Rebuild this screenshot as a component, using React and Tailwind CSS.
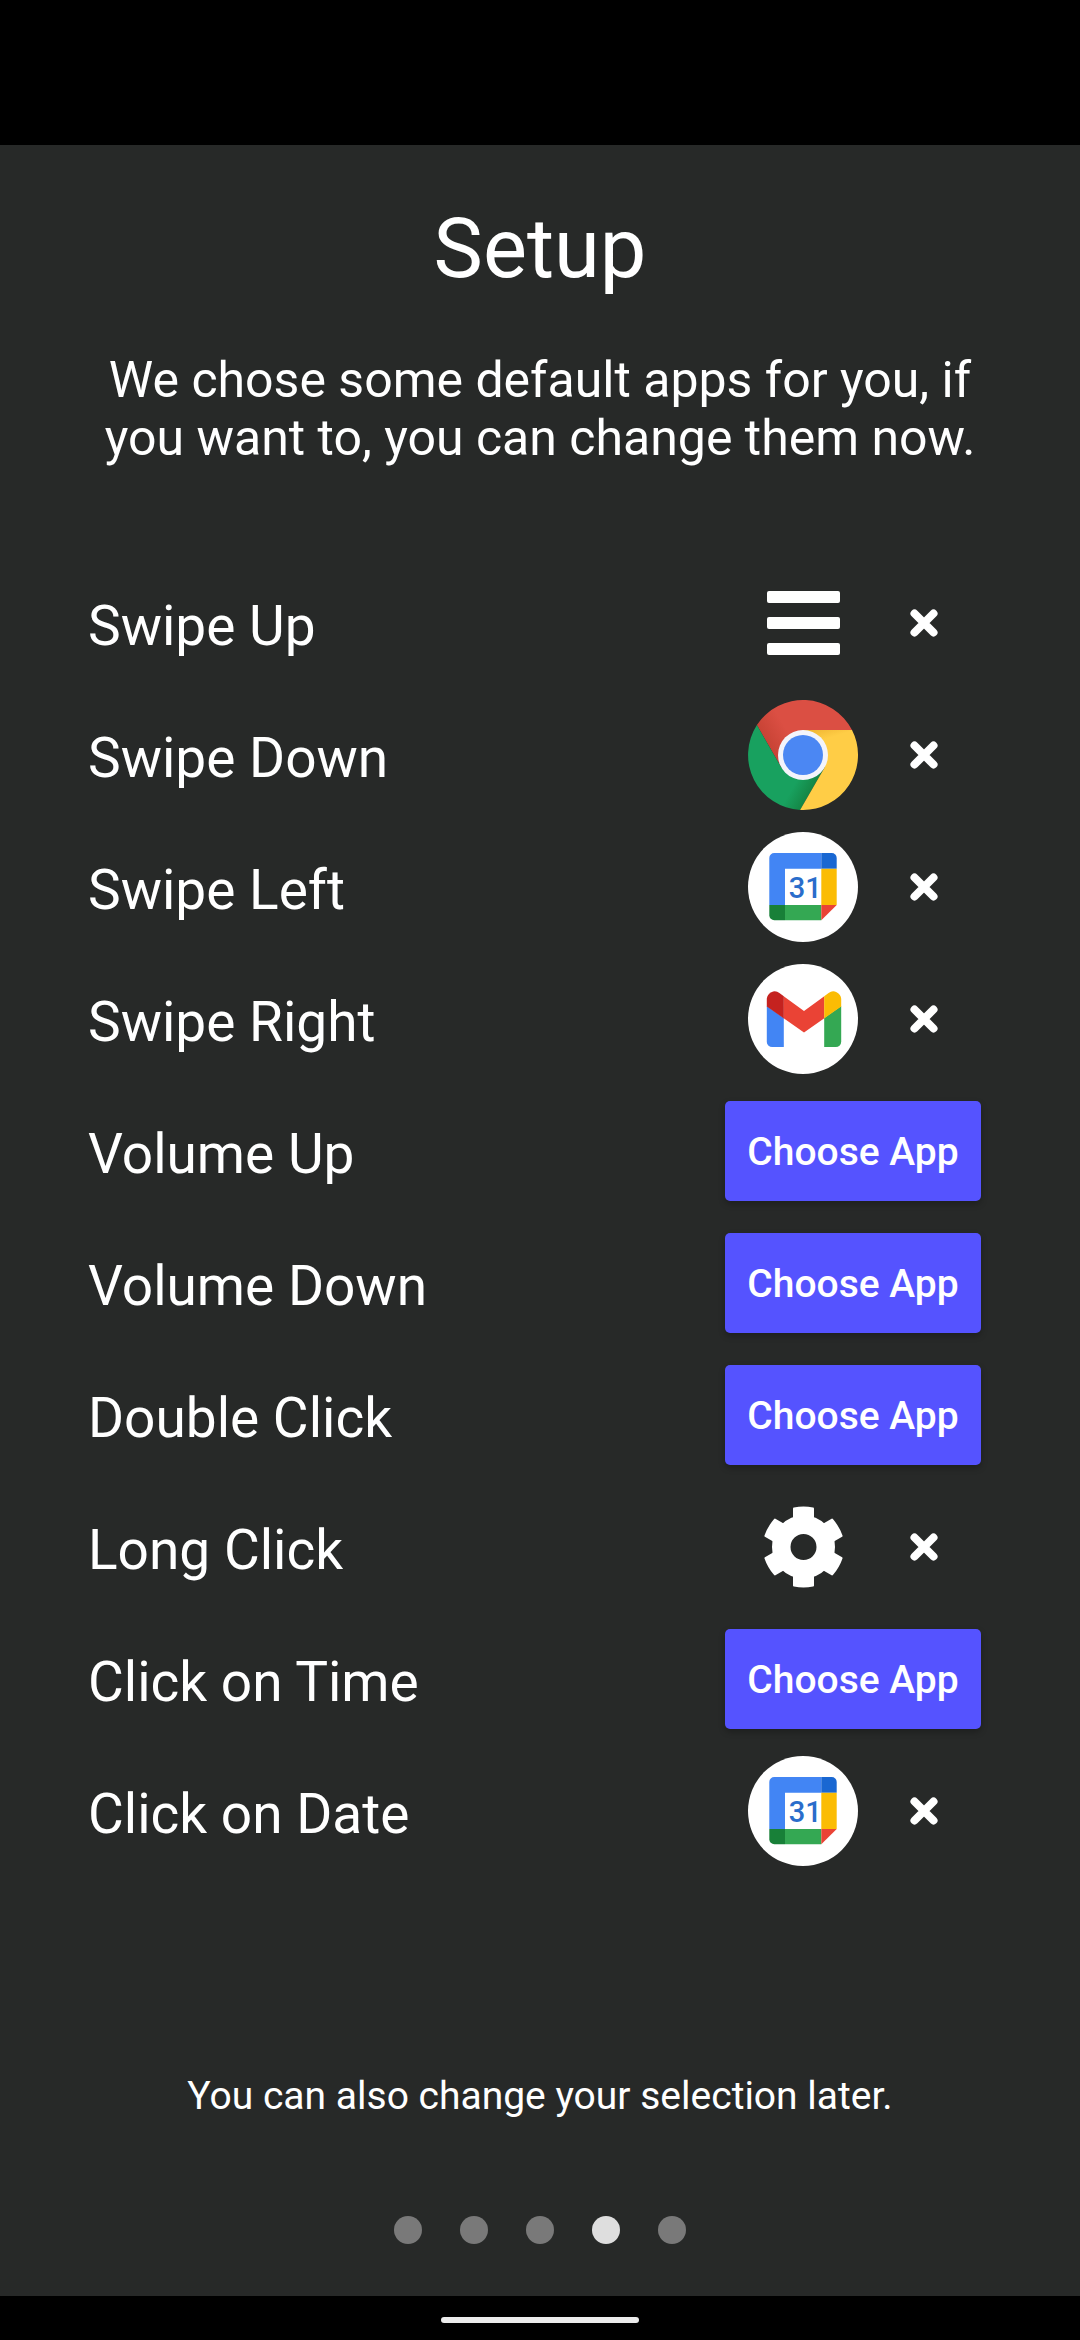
// src/pages/SetupPage.jsx
import React from "react";

const MenuIcon = () => (
  <svg viewBox="-55 -55 110 110" className="size-[110px]" fill="#fff">
    <rect x="-36" y="-32" width="73" height="12" rx="2" />
    <rect x="-36" y="-6" width="73" height="12" rx="2" />
    <rect x="-36" y="20" width="73" height="12" rx="2" />
  </svg>
);

const GearIcon = () => (
  <svg viewBox="-55 -55 110 110" className="size-[110px]" fill="#fff">
    <circle
      cx="0.5"
      r="22.25"
      fill="none"
      stroke="#fff"
      strokeWidth="18.5"
    />
    {[0, 60, 120, 180, 240, 300].map((angle) => (
      <path
        key={angle}
        transform={`translate(0.5 0) rotate(${angle})`}
        d="M-10.5 -28V-38.5Q-10.5 -39.3 -9.6 -39.5Q0 -41.3 9.6 -39.5Q10.5 -39.3 10.5 -38.5V-28Z"
      />
    ))}
  </svg>
);

const ChromeIcon = () => (
  <svg viewBox="-55 -55 110 110" className="size-[110px]">
    <defs>
      <linearGradient id="chromeRed" gradientUnits="userSpaceOnUse" x1="-36" y1="-8" x2="-14" y2="-21">
        <stop offset="0" stopColor="#c64234" />
        <stop offset="1" stopColor="#db4f43" />
      </linearGradient>
      <linearGradient id="chromeYellow" gradientUnits="userSpaceOnUse" x1="12" y1="-27" x2="16" y2="-14">
        <stop offset="0" stopColor="#efb532" />
        <stop offset="1" stopColor="#ffcd46" />
      </linearGradient>
      <linearGradient id="chromeGreen" gradientUnits="userSpaceOnUse" x1="10" y1="34" x2="-6" y2="25">
        <stop offset="0" stopColor="#148544" />
        <stop offset="1" stopColor="#18a15f" />
      </linearGradient>
    </defs>
    <path d="M49 -25A55 55 0 0 0 -46.1 -29.9L-21.65 12.5L0 0V-25Z" fill="url(#chromeRed)" />
    <path d="M-46.1 -29.9A55 55 0 0 0 -2.9 54.9L21.65 12.5L0 0L-21.65 12.5Z" fill="url(#chromeGreen)" />
    <path d="M-2.9 54.9A55 55 0 0 0 49 -25H0V0L21.65 12.5Z" fill="url(#chromeYellow)" />
    <circle r="25" fill="#f3f4fb" />
    <circle r="20" fill="#4b87f3" />
  </svg>
);

const CalendarIcon = () => (
  <svg viewBox="0 0 110 110" className="size-[110px]">
    <circle cx="55" cy="55" r="55" fill="#fff" />
    <path d="M73.3 21.1H26.3a5 5 0 0 0 -5 5V73H37V36.8H73.3Z" fill="#4285f4" />
    <path d="M73.3 21.1H83.7a5 5 0 0 1 5 5V36.8H73.3Z" fill="#1967d2" />
    <path d="M73.3 36.8H88.7V73H73.3Z" fill="#fbbc04" />
    <path d="M37 73H73.3V88.2H37Z" fill="#34a853" />
    <path d="M21.3 73H37V88.2H26.3a5 5 0 0 1 -5 -5Z" fill="#188038" />
    <path d="M73.3 73H88.7L73.3 88.2Z" fill="#ea4335" />
    <text
      x="40.7"
      y="66"
      fontFamily="Roboto, sans-serif"
      fontWeight="500"
      fontSize="29"
      fill="#2a6dcb"
    >
      31
    </text>
  </svg>
);

const GmailIcon = () => (
  <svg viewBox="0 0 110 110" className="size-[110px]">
    <circle cx="55" cy="55" r="55" fill="#fff" />
    <path d="M18.8 42L35.8 54V83H24.1a5.3 5.3 0 0 1 -5.3 -5.3Z" fill="#4285f4" />
    <path d="M93.2 42L76.2 54V83H87.9a5.3 5.3 0 0 0 5.3 -5.3Z" fill="#34a853" />
    <path d="M35.7 32.2L56 47L76.3 32.2V54.3L56 68.4L35.7 54.3Z" fill="#ea4335" />
    <path d="M18.8 42.4V34.8A8 8 0 0 1 31.4 28.9L35.8 32.2V54.4Z" fill="#c5221f" />
    <path d="M93.2 42.4V34.8A8 8 0 0 0 80.6 28.9L76.2 32.2V54.4Z" fill="#fbbc04" />
  </svg>
);

const CloseIcon = () => (
  <svg viewBox="-14 -14 28 28" className="size-7">
    <path
      d="M-9.5 -9.5L9.5 9.5M9.5 -9.5L-9.5 9.5"
      stroke="#fff"
      strokeWidth="8"
      strokeLinecap="round"
    />
  </svg>
);

const actions = [
  { label: "Swipe Up", icon: MenuIcon },
  { label: "Swipe Down", icon: ChromeIcon },
  { label: "Swipe Left", icon: CalendarIcon },
  { label: "Swipe Right", icon: GmailIcon },
  { label: "Volume Up" },
  { label: "Volume Down" },
  { label: "Double Click" },
  { label: "Long Click", icon: GearIcon },
  { label: "Click on Time" },
  { label: "Click on Date", icon: CalendarIcon },
];

function ActionRow({ label, icon: Icon }) {
  return (
    <div className="flex h-[132px] items-center justify-between pr-[99px] pl-[88px]">
      <p className="pt-1.5 text-[55px] leading-[64px]">{label}</p>
      {Icon ? (
        <div className="flex w-[256px] items-center pl-[23px]">
          <Icon />
          <button className="ml-[52px]">
            <CloseIcon />
          </button>
        </div>
      ) : (
        <button className="h-[100px] w-[256px] rounded-[5px] bg-[#5553ff] pt-0.5 text-[39px] font-medium whitespace-nowrap shadow-[0_3px_6px_rgba(0,0,0,0.25)]">
          Choose App
        </button>
      )}
    </div>
  );
}

export default function App() {
  return (
    <div className="flex h-[2340px] w-[1080px] flex-col bg-black font-[Roboto,sans-serif] text-white">
      {/* ===== STATUS BAR ===== */}
      <div className="h-[145px]" />

      <main className="flex h-[2151px] flex-col bg-[#272928]">
        {/* ===== HEADER ===== */}
        <header className="h-[412px] pt-14 text-center">
          <h1 className="text-[83px] leading-[96px]">Setup</h1>
          <p className="mt-[54px] text-[50px] leading-[58px]">
            We chose some default apps for you, if
            <br />
            you want to, you can change them now.
          </p>
        </header>

        {/* ===== ACTIONS ===== */}
        <section className="h-[1320px]">
          {actions.map((a) => (
            <ActionRow key={a.label} {...a} />
          ))}
        </section>

        {/* ===== FOOTER ===== */}
        <footer className="flex flex-col items-center pt-[196px]">
          <p className="text-[39px] leading-[46px]">
            You can also change your selection later.
          </p>
          <div className="mt-[97px] flex gap-[38px]">
            {[0, 1, 2, 3, 4].map((i) => (
              <span
                key={i}
                className={`size-7 rounded-full ${i === 3 ? "bg-[#dedede]" : "bg-[#797979]"}`}
              />
            ))}
          </div>
        </footer>
      </main>

      {/* ===== NAVIGATION BAR ===== */}
      <div className="flex h-[44px] justify-center pt-[21px]">
        <div className="h-1.5 w-[198px] rounded-full bg-[#ebebeb]" />
      </div>
    </div>
  );
}
